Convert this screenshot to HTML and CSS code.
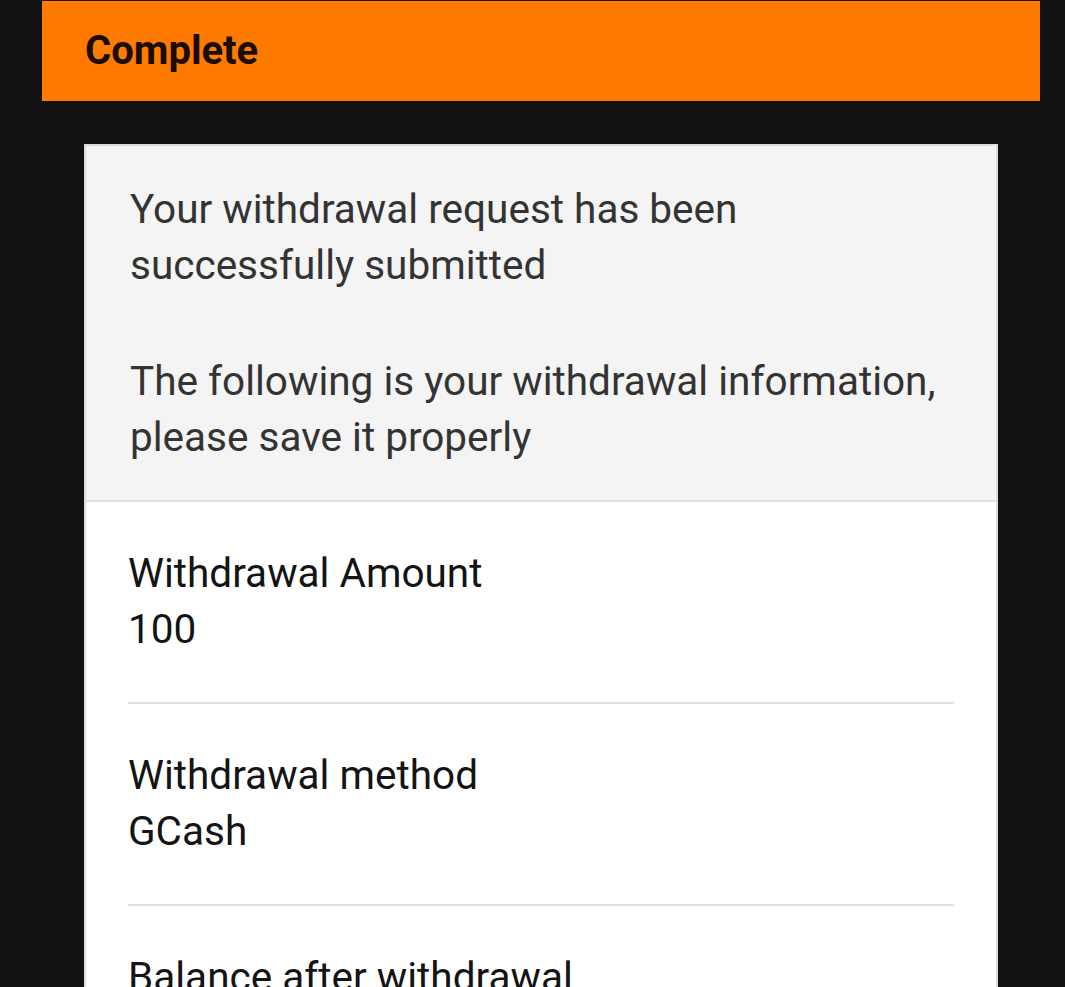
FILE: index.html
```html
<!DOCTYPE html>
<html lang="en">
<head>
<meta charset="utf-8">
<title>Complete</title>
<link rel="stylesheet" href="styles.css">
</head>
<body>
<div class="page">
  <header class="topbar">Complete</header>
  <section class="card">
    <div class="notice">
      <p>Your withdrawal request has been successfully submitted</p>
      <p>The following is your withdrawal information, please save it properly</p>
    </div>
    <div class="details">
      <div class="row">
        <div class="label">Withdrawal Amount</div>
        <div class="value">100</div>
      </div>
      <div class="row">
        <div class="label">Withdrawal method</div>
        <div class="value">GCash</div>
      </div>
      <div class="row">
        <div class="label">Balance after withdrawal</div>
        <div class="value">0</div>
      </div>
    </div>
  </section>
</div>
</body>
</html>
```

FILE: styles.css
```css
html, body {
  margin: 0;
  padding: 0;
  background: #111111;
  font-family: Roboto, "Noto Sans", "Liberation Sans", sans-serif;
}

.page {
  width: 998px;
  margin-left: 42px;
}

.topbar {
  height: 101px;
  line-height: 100px;
  background: #ff7a00;
  color: #1a0d03;
  font-size: 40px;
  font-weight: 700;
  padding-left: 43px;
  box-sizing: border-box;
  border-top: 1px solid #2a1400;
}

.card {
  margin: 43px 42px 0 42px;
  border: 2px solid #dcdcdc;
  border-bottom: none;
  background: #ffffff;
}

.notice {
  background: #f4f4f4;
  padding: 35px 44px 35px 44px;
  border-bottom: 2px solid #e0e0e0;
  color: #333333;
  font-size: 40.5px;
  line-height: 56px;
}

.notice p {
  margin: 0;
}

.notice p + p {
  margin-top: 60px;
}

.details {
  padding: 0 42px;
}

.row {
  padding: 43px 0 45px 0;
  border-bottom: 2px solid #e2e2e2;
  color: #141414;
  font-size: 40.5px;
  line-height: 56px;
}
```
